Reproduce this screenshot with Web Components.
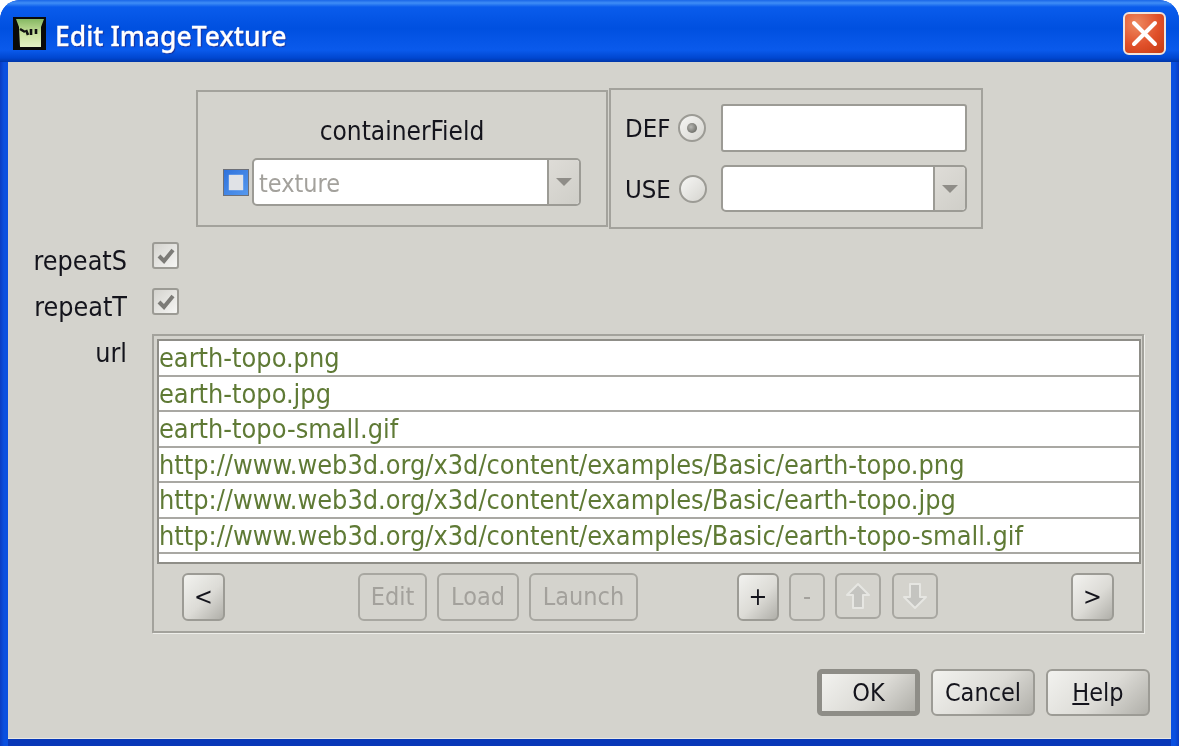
<!DOCTYPE html>
<html><head><meta charset="utf-8">
<style>
html,body{margin:0;padding:0;width:1179px;height:746px;overflow:hidden;background:#fff}
body{font-family:"DejaVu Sans Condensed","DejaVu Sans",sans-serif;font-size:25px;color:#14141c}
</style></head><body>
<edit-window>
  <title-bar slot="title">Edit ImageTexture</title-bar>
  <div style="display:flex;justify-content:center;align-items:center">
    <container-panel></container-panel>
    <def-panel></def-panel>
  </div>
  <field-grid></field-grid>
  <div style="display:flex;justify-content:flex-end;gap:11px;margin-top:auto;padding-right:21px">
    <ui-btn w="103" h="47" variant="default">OK</ui-btn>
    <ui-btn w="104" h="47">Cancel</ui-btn>
    <ui-btn w="104" h="47"><u>H</u>elp</ui-btn>
  </div>
</edit-window>
<script>
function def(name, css, html, init){
  customElements.define(name, class extends HTMLElement{
    constructor(){super();const r=this.attachShadow({mode:'open'});r.innerHTML='<style>'+css+'</style>'+html;}
    connectedCallback(){if(init)init.call(this,this.shadowRoot);}
  });
}
def('edit-window',`
:host{display:flex;flex-direction:column;width:1179px;height:746px;box-sizing:border-box;border-radius:20px 20px 0 0;overflow:hidden;filter:blur(.55px);
background:linear-gradient(90deg,#0a3cc0 0,#0a50e0 4px,#0a50e0 calc(100% - 4px),#0a3cc0 100%)}
.body{flex:1;display:flex;flex-direction:column;margin:0 8px 8px;background:#d4d3cd;padding:26px 0 22px;min-height:0;box-sizing:border-box;
box-shadow:0 1px 0 #e8e8e4,0 8px 0 #0838b8}
`,`<slot name="title"></slot><div class="body"><slot></slot></div>`);
def('title-bar',`
:host{display:flex;align-items:center;height:62px;flex:none;box-sizing:border-box;padding:5px 13px 0 13px;
background:linear-gradient(#1a66e8 0,#3f8ef6 3px,#0a5cec 7px,#0050e0 28px,#0a5aec 50px,#0046d0 58px,#0036a8 62px);
color:#fff;font-family:"Noto Sans",sans-serif;font-size:26.5px;font-weight:500;text-shadow:1px 1px 1px #1a2a90}
svg{display:block;flex:none}
.t{margin:4px 0 0 9px;flex:1;-webkit-text-stroke:.3px #fff}
.x{width:43px;height:43px;box-sizing:border-box;border:2px solid #f0e4dc;border-radius:6px;background:radial-gradient(circle at 30% 25%,#ee8a60,#e0502a 55%,#c43a12);display:flex;align-items:center;justify-content:center}
`,`<svg width="33" height="33" viewBox="0 0 33 33"><rect width="33" height="33" fill="#0a0a0a"/>
<defs><linearGradient id="g" x1="0" y1="0" x2="0" y2="1"><stop offset="0" stop-color="#86b862"/><stop offset=".5" stop-color="#c8e09c"/><stop offset="1" stop-color="#e4f0c4"/></linearGradient></defs>
<path d="M3 2H31L28 10L28 30H7L6 10Z" fill="url(#g)"/>
<path d="M7 12l5 3M13 13l2 5M18 12v6M23 12v5" stroke="#111" stroke-width="2.6" fill="none"/></svg>
<span class="t"><slot></slot></span>
<div class="x"><svg width="29" height="29" viewBox="0 0 29 29"><path d="M4 4L25 25M25 4L4 25" stroke="#fff" stroke-width="4" stroke-linecap="round"/></svg></div>`);
def('ui-combo',`
:host{display:flex;height:48px;box-sizing:border-box;border:2px solid #9c9b95;border-radius:5px;background:#fff;color:#a3a19c;font-size:25px}
.t{flex:1;line-height:47px;padding-left:5px;white-space:nowrap;overflow:hidden;border-right:2px solid #9c9b95}
.b{flex:none;width:30px;background:linear-gradient(135deg,#dedcd7,#cfcec8);display:flex;align-items:center;justify-content:center;border-radius:0 3px 3px 0}
.b i{display:block;width:0;height:0;border:8px solid transparent;border-top:8px solid #8f8d88;border-bottom:0}
`,`<div class="t"><slot></slot></div><div class="b"><i></i></div>`);
def('ui-radio',`
:host{display:block;width:28px;height:28px;box-sizing:border-box;border:2px solid #9c9b95;border-radius:50%;background:linear-gradient(135deg,#f6f6f4,#d6d5d0);position:relative;flex:none}
:host([on])::after{content:"";position:absolute;left:7px;top:7px;width:10px;height:10px;border-radius:50%;background:radial-gradient(circle at 40% 40%,#b8b8b4,#55554f)}
`,``);
def('ui-check',`
:host{display:flex;align-items:center;justify-content:center;width:27px;height:27px;box-sizing:border-box;border:2px solid #9c9b95;border-radius:3px;background:linear-gradient(135deg,#d4d3ce,#f6f6f4)}
path{fill:none;stroke:#7c7b77;stroke-width:4}
`,`<svg width="18" height="16" viewBox="0 0 18 16"><path d="M2 8L7 13L16 2"/></svg>`);
def('container-panel',`
:host{display:flex;flex-direction:column;align-items:center;width:412px;height:137px;box-sizing:border-box;border:2px solid #a3a29c;padding-top:21px;font-size:26px}
.l{line-height:36px;height:45px}
.r{display:flex;align-items:center;gap:3px}
.s{width:26px;height:27px;box-sizing:border-box;background:linear-gradient(135deg,#2f72dc,#5598ee);border:1px solid #6c6f78;padding:3px;display:flex;align-items:center;justify-content:center}
.s i{display:block;width:14px;height:15px;background:#e0e2e6;box-shadow:0 0 1px #fff}
ui-combo{width:329px}
`,`<div class="l">containerField</div><div class="r"><div class="s"><i></i></div><ui-combo>texture</ui-combo></div>`);
def('def-panel',`
:host{display:grid;grid-template-columns:96px 246px;row-gap:13px;align-content:start;width:374px;height:141px;box-sizing:border-box;border:2px solid #a3a29c;padding:14px 0 0 14px;margin-left:1px;font-size:25.5px}
.c{display:flex;align-items:center;gap:8px}
.i{height:48px;box-sizing:border-box;border:2px solid #9c9b95;border-radius:3px;background:#fff}
ui-combo{height:47px}
`,`<div class="c">DEF<ui-radio on></ui-radio></div><div class="i"></div>
<div class="c">USE<ui-radio></ui-radio></div><ui-combo></ui-combo>`);
def('field-grid',`
:host{display:grid;grid-template-columns:119px 992px;column-gap:25px;row-gap:19px;margin-top:13px;align-items:start;font-size:26.7px}
.l{text-align:right;line-height:38px;height:27px}
`,`<div class="l">repeatS</div><ui-check></ui-check>
<div class="l">repeatT</div><ui-check></ui-check>
<div class="l">url</div><url-panel></url-panel>`);
def('url-panel',`
:host{display:flex;flex-direction:column;width:992px;height:299px;box-sizing:border-box;border:2px solid #a3a29c;box-shadow:1px 1px 0 #eeeeea;padding:3px 1px 0 3px;font-size:25px}
.list{height:225px;box-sizing:border-box;border:2px solid #8f8e88;background:#fff;flex:none;color:#5f7a35;overflow:hidden;font-size:26.85px}
.list div{height:35.5px;line-height:33px;box-sizing:border-box;border-bottom:2px solid #a9a8a3;white-space:nowrap}
.bar{display:flex;align-items:flex-start;padding:9px 0 0 25px}
`,`<div class="list">
<div>earth-topo.png</div><div>earth-topo.jpg</div><div>earth-topo-small.gif</div>
<div>http://www.web3d.org/x3d/content/examples/Basic/earth-topo.png</div>
<div>http://www.web3d.org/x3d/content/examples/Basic/earth-topo.jpg</div>
<div>http://www.web3d.org/x3d/content/examples/Basic/earth-topo-small.gif</div>
</div>
<div class="bar">
<ui-btn w="43" h="48" style="margin-right:133px">&lt;</ui-btn>
<ui-btn w="69" h="48" disabled style="margin-right:10px">Edit</ui-btn>
<ui-btn w="82" h="48" disabled style="margin-right:10px">Load</ui-btn>
<ui-btn w="109" h="48" disabled style="margin-right:99px">Launch</ui-btn>
<ui-btn w="42" h="48" style="margin-right:10px">+</ui-btn>
<ui-btn w="36" h="48" disabled style="margin-right:10px">-</ui-btn>
<ui-btn w="46" h="46" disabled style="margin-right:11px"><svg width="26" height="28" viewBox="0 0 26 28"><path d="M13 2L24 13H18V26H8V13H2Z" fill="#c4c4c0" stroke="#e6e6e2" stroke-width="2" stroke-linejoin="round"/></svg></ui-btn>
<ui-btn w="46" h="46" disabled style="margin-right:133px"><svg width="26" height="28" viewBox="0 0 26 28"><path d="M13 26L24 15H18V2H8V15H2Z" fill="#c4c4c0" stroke="#e6e6e2" stroke-width="2" stroke-linejoin="round"/></svg></ui-btn>
<ui-btn w="43" h="48">&gt;</ui-btn>
</div>`);
def('ui-btn',`
:host{display:inline-flex;align-items:center;justify-content:center;box-sizing:border-box;flex:none;border:2px solid #9c9b95;border-radius:6px;background:linear-gradient(135deg,#f2f2ef 0,#dcdbd6 55%,#b0afa9 100%);color:#14141c;padding-bottom:1px}
:host([disabled]){background:none;color:#a3a19c;border-color:#a8a7a1}
:host([variant=default]){border:5px solid #8e8d87;border-radius:5px}
`,`<slot></slot>`,function(){this.style.width=this.getAttribute('w')+'px';this.style.height=this.getAttribute('h')+'px';});
</script>
</body></html>
